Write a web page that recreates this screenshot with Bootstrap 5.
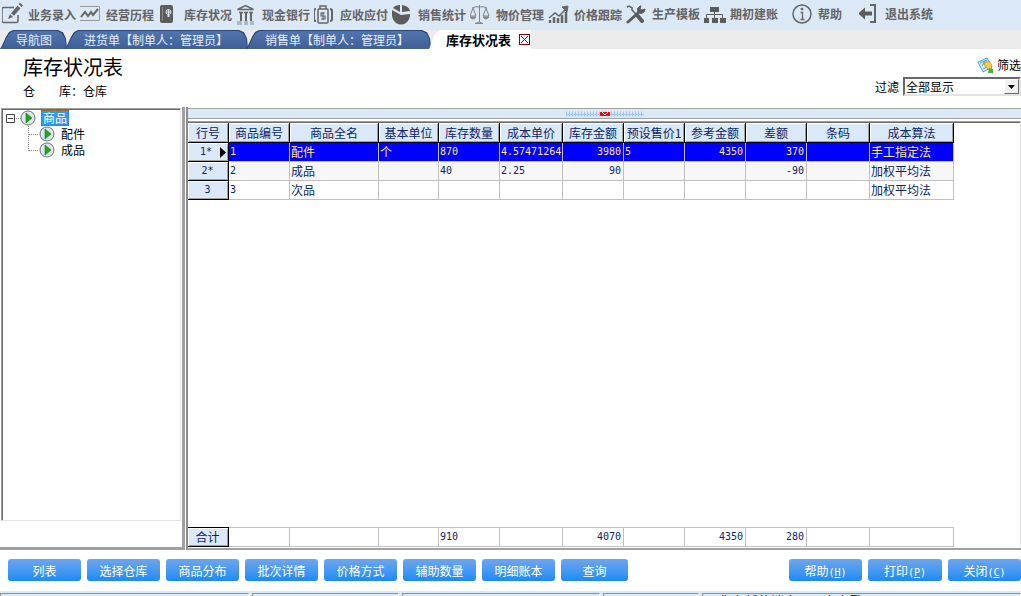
<!DOCTYPE html>
<html lang="zh-CN">
<head>
<meta charset="utf-8">
<meta name="viewport" content="width=device-width, initial-scale=1">
<title>库存状况表</title>
<link href="https://cdn.jsdelivr.net/npm/bootstrap@5.3.0/dist/css/bootstrap.min.css" rel="stylesheet">
<style>
body{font-family:"Noto Sans CJK SC",sans-serif;font-size:12px;line-height:16px;color:#000;background:#fff}
a{color:inherit;text-decoration:none}
.toolbar{background:#dbe8f6;height:30px;padding-left:2px;color:#636363;font-weight:700}
.toolbar a{flex:0 0 78px;height:28px}
.toolbar a.tool-short{flex-basis:67px}
.toolbar .tool-gap{margin-left:10px}
.toolbar svg{flex:0 0 22px;width:22px;height:22px;margin-right:4px}
.toolbar a span{padding-top:2px}
.toolbar a.tool-high span{padding-top:0}
.tabstrip{background:#ebebeb;height:19px}
.doc-tab{position:relative;height:19px;line-height:19px;padding:0 20px 0 19px;margin-right:-2px;color:#e3efff;background:#2c4577;
 clip-path:polygon(0 100%,2px 82%,6px 35%,9px 10%,13px 0,calc(100% - 9px) 0,calc(100% - 4px) 12%,calc(100% - 1px) 45%,100% 100%)}
.doc-tab::before{content:"";position:absolute;inset:1px 1px 0 1px;background:linear-gradient(#5274ae,#3f5f96);clip-path:inherit}
.doc-tab span{position:relative}
.doc-tab.first{padding:0 15px 0 16px}
.doc-tab.wide{padding-right:22px}
.tab-active{background:#fff;height:19px;font-size:13px;font-weight:700;padding:0 1px 0 17px;clip-path:polygon(0 100%,6px 20%,11px 0,100% 0,100% 100%)}
.close-box{width:11px;height:11px;padding:0;border:1px solid #8b0000;background:#fff;line-height:0}
.doc-head{height:58px;padding-left:23px}
.doc-head h1{font-size:20px;line-height:24px;font-weight:400;padding-top:6px}
.filter-wrap{width:118px;height:19px}
.filter-wrap select{appearance:none;width:100%;height:19px;font-size:12px;line-height:14px;padding:0 18px 0 1px;border:2px solid;border-color:#696969 #e3e3e3 #e3e3e3 #696969;border-radius:0;background:#fff;color:#000}
.arrow-btn{position:absolute;right:2px;top:2px;width:15px;height:15px;background:#f0f0f0;border:1px solid;border-color:#fff #696969 #696969 #fff;pointer-events:none}
.left-pane{flex:0 0 185px;border-right:3px solid #a0a0a0;border-bottom:3px solid #a0a0a0;padding:1px 1px 26px 1px}
.tree{border:1px solid;border-color:#a0a0a0 #e3e3e3 #e3e3e3 #a0a0a0;box-shadow:inset 1px 1px #696969;padding:1px 0 0 4px}
.tree svg{display:block}
.tree-label{height:16px;padding-left:3px;line-height:16px}
.tree-label.on{background:#3097fa;color:#fff;padding:0 2px;margin-left:1px;outline:1px dotted #a45c10;outline-offset:-1px}
.tree-child{padding-left:20px}
.right-pane{border-left:2px solid #8c8c8c;border-bottom:2px solid #a0a0a0;margin-left:1px;padding-top:1px}
.grip{height:11px;background:#dbe8f8;border-top:1px solid #a0a0a0;border-bottom:1px solid #a0a0a0}
.grid-frame{border-top:1px solid #a0a0a0;box-shadow:inset 0 1px #696969;margin-top:2px;border-right:1px solid #e3e3e3;padding:1px 0}
.stock{width:766px;table-layout:fixed;border-collapse:separate;border-spacing:0;color:#0a246a}
.stock td,.stock th{height:19px;padding:0 2px 0 1px;line-height:18px;border-right:1px solid #c0c0c0;border-bottom:1px solid #c0c0c0;white-space:nowrap;overflow:hidden;font-weight:400}
.stock .cell-head{background:#dbe8f8;border-color:#000;text-align:center;box-shadow:inset 1px 1px #fff,inset -1px -1px #a0a0a0}
.stock thead .cell-head{height:20px;padding:0}
.stock .num,.stock tbody .cell-head{font-family:"DejaVu Sans Mono",monospace;font-size:10px}
.stock .picked td{background:#00f;color:#ffe680}
.stock .striped td{background:#f7f7f7}
.total td,.total th{border-top:1px solid #c0c0c0;height:20px}
.total .cell-head{border-top:1px solid #000}
.actions{height:41px;padding:9px 0 0 8px;gap:6px}
.actions .btn{width:73px;height:22px;padding:0;font-size:12px;line-height:24px;color:#fff;border:0;border-radius:3px;background:linear-gradient(#6ea5ee,#4598f2 55%,#1a8afa)}
.actions .btn.narrow{width:67px}
.actions .btn.wide{width:74px}
.keycap{font-family:"DejaVu Sans Mono",monospace;font-size:10px}
.statusbar{height:5px;background:#dbe8f6;padding-top:2px;gap:3px}
.statusbar div{border-top:1px solid #909090;border-left:1px solid #909090;border-right:1px solid #fff;height:3px;flex:0 0 198px;overflow:hidden;font-size:13px;line-height:14px}
.statusbar .pane-a{flex-basis:249px}
.statusbar .pane-b{flex-basis:147px}
.statusbar .pane-c{flex-basis:96px}
</style>
</head>
<body>
<div class="d-flex flex-column vh-100 overflow-hidden">
<nav class="toolbar d-flex text-nowrap flex-shrink-0 overflow-hidden">
 <a href="#" class="d-flex align-items-center"><svg viewBox="0 0 22 22" fill="none" stroke="#666"><path d="M12 4.500H1.500q-1.500 0-1.500 2v11q0 2 2 2h12q2 0 2-2V12" stroke-width="1.500"/><path d="M10.500 11.500 17 4" stroke-width="4"/><path d="m18 2.500 1.500-1.500" stroke-width="4"/><path d="m6 16 2-5 3 3z" fill="#666" stroke="none"/></svg><span>业务录入</span></a>
 <a href="#" class="d-flex align-items-center"><svg viewBox="0 0 22 22" fill="none" stroke="#666"><path d="M-.5 3.500h20v14h-20z" stroke="#999"/><path d="m1 14 4-5 3 4 3-4 2 3 5-6" stroke-width="2"/></svg><span>经营历程</span></a>
 <a href="#" class="d-flex align-items-center"><svg viewBox="0 0 22 22"><rect x="2" y="2" width="13" height="18" rx="2" fill="#5c5c5c"/><path d="M4.500 4v14" stroke="#858585"/><circle cx="10.500" cy="9" r="2.500" fill="none" stroke="#dce8f5"/><path d="M10.500 7v7M8 9h5m-4 4h3" fill="none" stroke="#dce8f5"/></svg><span>库存状况</span></a>
 <a href="#" class="d-flex align-items-center"><svg viewBox="0 0 22 22" fill="none" stroke="#666"><path d="m1.500 6.500 8-4 8 4z" stroke-width="1.500"/><path d="M3 9.500h4m1 0h4m1 0h4" stroke-width="1.500"/><path d="M5 9v9m5-9v9m5-9v9" stroke-width="2"/><path d="M1 19h5m2 0h4m2 0h4M1 21h5m2 0h4m2 0h4" stroke="#888"/></svg><span>现金银行</span></a>
 <a href="#" class="d-flex align-items-center"><svg viewBox="0 0 22 22" fill="none" stroke="#666"><path d="M2 6Q0 6 0 8v8q0 2 2 2M16 6q2 0 2 2v8q0 2-2 2" stroke-width="2"/><path d="M6 6V3h6v3" stroke-width="1.500"/><rect x="4" y="6" width="10" height="14" rx="1" stroke-width="1.500"/><path d="M11 10H7v3h4v3H7m2-7v8" stroke-width="1.200"/></svg><span>应收应付</span></a>
 <a href="#" class="d-flex align-items-center"><svg viewBox="0 0 22 22" fill="#5c5c5c"><path d="M9 12 0 7q-1 9 4 13 5 3 10 0 4-3 4-9z"/><path d="M8 9 1 5q2-3 7-3zM10 9V2q7 1 8 6z"/></svg><span>销售统计</span></a>
 <a href="#" class="d-flex align-items-center"><svg viewBox="0 0 22 22" fill="none" stroke="#858585"><path d="M9.500 2v17M2 5q4-2 7.500-1Q13 3 17 5M3 5 0 13h6L3 5m13 0-3 8h6l-3-8"/><path d="M0 14h6q-3 4-6 0zm13 0h6q-3 4-6 0z" fill="#858585"/><path d="M5 20.500q4-3 8 0z" fill="#fff"/></svg><span>物价管理</span></a>
 <a href="#" class="d-flex align-items-center"><svg viewBox="0 0 22 22" fill="none" stroke="#666"><path d="M2 20v-3m4 3v-6m4 6v-5m4 5v-8m4 8V9" stroke-width="2.500"/><path d="m1 15 6-5 4 3 7-7" stroke-width="1.500"/><path d="m14 4 6-1-1 6z" fill="#666"/></svg><span>价格跟踪</span></a>
 <a href="#" class="d-flex align-items-center tool-high"><svg viewBox="0 0 22 22" fill="none" stroke="#5c5c5c"><path d="m2 19 10-9" stroke-width="3" stroke-linecap="round"/><path d="m1 4 2-1 3 2v2l4 4" stroke-width="1.500"/><path d="m11 12 5 6" stroke-width="4" stroke-linecap="round"/><path d="M14 3q-4 2-2 6 3 3 6 0l1-3-3 1-2-1 1-3z" fill="#5c5c5c"/></svg><span>生产模板</span></a>
 <a href="#" class="d-flex align-items-center tool-high"><svg viewBox="0 0 22 22" fill="#5c5c5c"><path d="M6 4h9v5H6zM-1 15h6v5h-6zm9 0h6v5H8zm8 0h6v5h-6z"/><path d="M10.500 9v6M2.500 15v-3.500h16V15" fill="none" stroke="#5c5c5c"/></svg><span>期初建账</span></a>
 <a href="#" class="d-flex align-items-center tool-high tool-short tool-gap"><svg viewBox="0 0 22 22" fill="none" stroke="#666"><circle cx="10" cy="11" r="9" stroke-width="1.500"/><path d="M8.500 9.500h2v7m-2 0h4" stroke-width="1.300"/><circle cx="10" cy="6" r="1" fill="#666"/></svg><span>帮助</span></a>
 <a href="#" class="d-flex align-items-center tool-high"><svg viewBox="0 0 22 22" fill="#5c5c5c"><path d="m-1 10.500 7-6V8.500h7v4H6v4z"/><path d="M11 2h5v17h-5" fill="none" stroke="#666" stroke-width="2"/></svg><span>退出系统</span></a>
</nav>
<nav class="tabstrip d-flex text-nowrap flex-shrink-0">
 <a href="#" class="doc-tab first"><span>导航图</span></a>
 <a href="#" class="doc-tab"><span>进货单【制单人：管理员】</span></a>
 <a href="#" class="doc-tab wide"><span>销售单【制单人：管理员】</span></a>
 <div class="tab-active d-flex align-items-center"><span>库存状况表</span><button type="button" class="close-box ms-2" aria-label="关闭"><svg width="9" height="9" viewBox="0 0 9 9"><path d="m1 1 7 7m0-7-7 7" stroke="#8b0000"/></svg></button></div>
</nav>
<header class="doc-head d-flex justify-content-between flex-shrink-0">
 <div><h1 class="mb-0">库存状况表</h1><div class="pt-1">仓　　库：仓库</div></div>
 <div class="d-flex flex-column align-items-end">
  <a href="#" class="d-flex align-items-center pt-2 gap-1"><svg width="16" height="16" viewBox="0 0 16 16"><path d="m1 5 9-4 5 9-9 5z" fill="#d9eefc" stroke="#4a9be0"/><path d="m3 6 7-3M5 9l3-5m-2 8 6-3" stroke="#4a9be0" fill="none"/><path d="m8 5 4-1 3 4-1 5-3-1-4-4z" fill="#f5cb45" stroke="#bd8c1c" stroke-width=".7"/><path d="m12 11 4 1v4h-5z" fill="#4caf36"/></svg><span>筛选</span></a>
  <div class="d-flex align-items-center gap-1 pt-1"><label for="flt">过滤</label>
   <div class="filter-wrap position-relative"><select id="flt"><option>全部显示</option></select><span class="arrow-btn d-flex align-items-center justify-content-center"><svg width="7" height="4" viewBox="0 0 7 4"><path d="M0 0h7L3.500 4z"/></svg></span></div></div>
 </div>
</header>
<main class="d-flex flex-grow-1 overflow-hidden">
 <aside class="left-pane d-flex">
  <div class="tree flex-grow-1">
   <div class="d-flex"><svg width="34" height="16" viewBox="0 0 34 16"><path d="M.5 4.500h8v8h-8zM2 8.500h5" fill="none" stroke="#444"/><path d="M10 8.500h5" stroke="#888" stroke-dasharray="1 1"/><circle cx="22" cy="8" r="7" fill="#dfe6ee" stroke="#687580"/><path d="m20 3 6 5-6 5z" fill="#21a51e" stroke="#087c08" stroke-width=".6"/></svg><span class="tree-label on">商品</span></div>
   <div class="d-flex tree-child"><svg width="32" height="16" viewBox="0 0 32 16"><path d="M2.500 0v16M3 8.500h10" stroke="#888" stroke-dasharray="1 1"/><circle cx="21" cy="8" r="7" fill="#dfe6ee" stroke="#687580"/><path d="m19 3 6 5-6 5z" fill="#21a51e" stroke="#087c08" stroke-width=".6"/></svg><span class="tree-label">配件</span></div>
   <div class="d-flex tree-child"><svg width="32" height="16" viewBox="0 0 32 16"><path d="M2.500 0v9M3 8.500h10" stroke="#888" stroke-dasharray="1 1"/><circle cx="21" cy="8" r="7" fill="#dfe6ee" stroke="#687580"/><path d="m19 3 6 5-6 5z" fill="#21a51e" stroke="#087c08" stroke-width=".6"/></svg><span class="tree-label">成品</span></div>
  </div>
 </aside>
 <section class="right-pane d-flex flex-column flex-grow-1 overflow-hidden">
  <div class="grip d-flex justify-content-center align-items-center flex-shrink-0"><svg width="78" height="6" viewBox="0 0 78 6"><path d="M0 3h78" stroke="#9cc4f0" stroke-width="5" stroke-dasharray="1 2"/><path d="M0 3.500h78" stroke="#9cc4f0"/><path d="M34 1h10v4H34z" fill="#f00"/><path d="m36 1 3 3 3-3" fill="none" stroke="#fff"/></svg></div>
  <div class="grid-frame d-flex flex-column justify-content-between flex-grow-1">
   <table class="stock">
    <colgroup><col style="width:41px"><col style="width:61px"><col style="width:89px"><col style="width:60px"><col style="width:61px"><col style="width:63px"><col style="width:61px"><col style="width:61px"><col style="width:61px"><col style="width:61px"><col style="width:63px"><col style="width:84px"></colgroup>
    <thead><tr><th class="cell-head">行号</th><th class="cell-head">商品编号</th><th class="cell-head">商品全名</th><th class="cell-head">基本单位</th><th class="cell-head">库存数量</th><th class="cell-head">成本单价</th><th class="cell-head">库存金额</th><th class="cell-head">预设售价1</th><th class="cell-head">参考金额</th><th class="cell-head">差额</th><th class="cell-head">条码</th><th class="cell-head">成本算法</th></tr></thead>
    <tbody>
     <tr class="picked"><th class="cell-head"><span class="d-flex justify-content-end align-items-center gap-2">1*<svg width="6" height="11" viewBox="0 0 6 11"><path d="m0 0 6 5.500L0 11z"/></svg></span></th><td class="num">1</td><td>配件</td><td>个</td><td class="num">870</td><td class="num">4.57471264</td><td class="num text-end">3980</td><td class="num">5</td><td class="num text-end">4350</td><td class="num text-end">370</td><td></td><td>手工指定法</td></tr>
     <tr class="striped"><th class="cell-head">2*</th><td class="num">2</td><td>成品</td><td></td><td class="num">40</td><td class="num">2.25</td><td class="num text-end">90</td><td></td><td></td><td class="num text-end">-90</td><td></td><td>加权平均法</td></tr>
     <tr><th class="cell-head">3</th><td class="num">3</td><td>次品</td><td></td><td></td><td></td><td></td><td></td><td></td><td></td><td></td><td>加权平均法</td></tr>
    </tbody>
   </table>
   <table class="stock total">
    <colgroup><col style="width:41px"><col style="width:61px"><col style="width:89px"><col style="width:60px"><col style="width:61px"><col style="width:63px"><col style="width:61px"><col style="width:61px"><col style="width:61px"><col style="width:61px"><col style="width:63px"><col style="width:84px"></colgroup>
    <tfoot><tr><th class="cell-head">合计</th><td></td><td></td><td></td><td class="num">910</td><td></td><td class="num text-end">4070</td><td></td><td class="num text-end">4350</td><td class="num text-end">280</td><td></td><td></td></tr></tfoot>
   </table>
  </div>
 </section>
</main>
<div class="actions d-flex flex-shrink-0">
 <button type="button" class="btn">列表</button><button type="button" class="btn">选择仓库</button><button type="button" class="btn">商品分布</button><button type="button" class="btn">批次详情</button><button type="button" class="btn">价格方式</button><button type="button" class="btn">辅助数量</button><button type="button" class="btn">明细账本</button><button type="button" class="btn narrow">查询</button>
 <button type="button" class="btn ms-auto">帮助<span class="keycap">(<u>H</u>)</span></button><button type="button" class="btn wide">打印<span class="keycap">(<u>P</u>)</span></button><button type="button" class="btn">关闭<span class="keycap">(<u>C</u>)</span></button>
</div>
<footer class="statusbar d-flex flex-shrink-0 text-nowrap"><div class="pane-a"></div><div class="pane-b"></div><div></div><div class="pane-c"></div><div class="flex-grow-1 ps-3">您有新的消息，双击查看！</div></footer>
</div>
<script src="https://cdn.jsdelivr.net/npm/bootstrap@5.3.0/dist/js/bootstrap.bundle.min.js"></script>
</body>
</html>
